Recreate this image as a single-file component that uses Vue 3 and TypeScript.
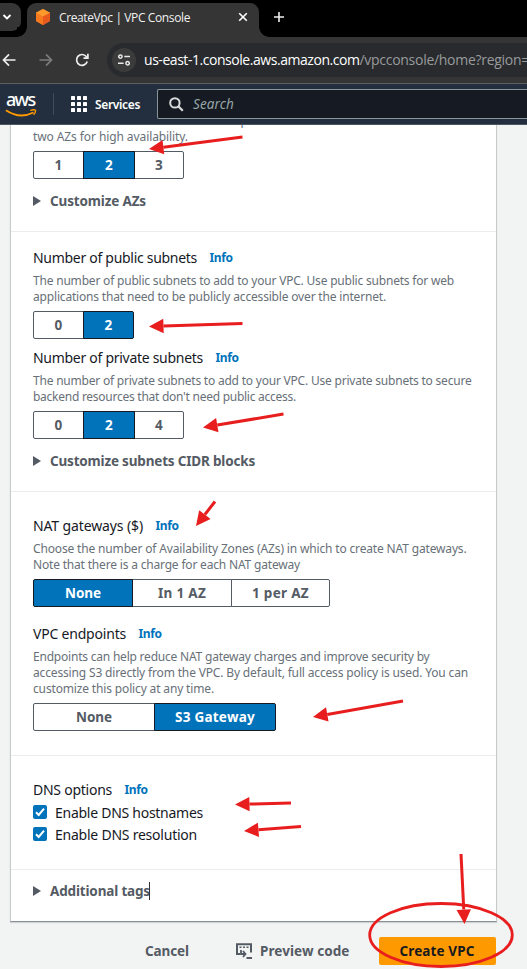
<script setup lang="ts">
import { computed, type Directive } from 'vue'

interface Line { text: string; width: number }
interface Option { label: string; size: number; textWidth: number; active?: boolean }
interface Field {
  title: string
  titleWidth: number
  lines: Line[]
  options: Option[]
}
interface Arrow { tail: [number, number]; tip: [number, number] }

// Tracks the text so that it fills the given width in pixels.
const vFit: Directive<HTMLElement, number> = {
  mounted(el, binding) {
    const natural = el.getBoundingClientRect().width
    const count = (el.textContent ?? '').length
    if (count > 0) el.style.letterSpacing = `${(binding.value - natural) / count}px`
  },
}

const azLines: Line[] = [
  { text: 'Choose the number of AZs in which to provision subnets. We recommend at least', width: 436 },
  { text: 'two AZs for high availability.', width: 155 },
]
const azOptions: Option[] = [
  { label: '1', size: 51, textWidth: 8 },
  { label: '2', size: 52, textWidth: 8, active: true },
  { label: '3', size: 50, textWidth: 8 },
]

const subnetFields: Field[] = [
  {
    title: 'Number of public subnets',
    titleWidth: 164,
    lines: [
      { text: 'The number of public subnets to add to your VPC. Use public subnets for web', width: 421 },
      { text: 'applications that need to be publicly accessible over the internet.', width: 353 },
    ],
    options: [
      { label: '0', size: 51, textWidth: 8 },
      { label: '2', size: 51, textWidth: 8, active: true },
    ],
  },
  {
    title: 'Number of private subnets',
    titleWidth: 170,
    lines: [
      { text: 'The number of private subnets to add to your VPC. Use private subnets to secure', width: 438.5 },
      { text: "backend resources that don't need public access.", width: 263 },
    ],
    options: [
      { label: '0', size: 51, textWidth: 8 },
      { label: '2', size: 52, textWidth: 8, active: true },
      { label: '4', size: 50, textWidth: 8 },
    ],
  },
]

const gatewayFields: Field[] = [
  {
    title: 'NAT gateways ($)',
    titleWidth: 110,
    lines: [
      { text: 'Choose the number of Availability Zones (AZs) in which to create NAT gateways.', width: 433.5 },
      { text: 'Note that there is a charge for each NAT gateway', width: 267 },
    ],
    options: [
      { label: 'None', size: 100, textWidth: 36, active: true },
      { label: 'In 1 AZ', size: 100, textWidth: 48 },
      { label: '1 per AZ', size: 99, textWidth: 57 },
    ],
  },
  {
    title: 'VPC endpoints',
    titleWidth: 93,
    lines: [
      { text: 'Endpoints can help reduce NAT gateway charges and improve security by', width: 396.5 },
      { text: 'accessing S3 directly from the VPC. By default, full access policy is used. You can', width: 435 },
      { text: 'customize this policy at any time.', width: 181 },
    ],
    options: [
      { label: 'None', size: 122, textWidth: 36 },
      { label: 'S3 Gateway', size: 122, textWidth: 80, active: true },
    ],
  },
]

const dnsOptions: Line[] = [
  { text: 'Enable DNS hostnames', width: 148 },
  { text: 'Enable DNS resolution', width: 142 },
]

const arrows: Arrow[] = [
  { tail: [242.5, 137], tip: [149, 149] },
  { tail: [242.5, 323.5], tip: [149, 326.5] },
  { tail: [283.5, 414], tip: [203, 427.5] },
  { tail: [215, 501.5], tip: [196, 526] },
  { tail: [403, 701], tip: [313, 717] },
  { tail: [291, 803], tip: [235, 804.5] },
  { tail: [301, 826.5], tip: [244, 831] },
  { tail: [461, 854], tip: [464.5, 924] },
]

const drawnArrows = computed(() =>
  arrows.map(({ tail, tip }) => {
    const dx = tip[0] - tail[0]
    const dy = tip[1] - tail[1]
    const len = Math.hypot(dx, dy)
    const ux = dx / len
    const uy = dy / len
    const bx = tip[0] - ux * 14.5
    const by = tip[1] - uy * 14.5
    return {
      x1: tail[0],
      y1: tail[1],
      x2: bx,
      y2: by,
      head: `${tip[0]},${tip[1]} ${bx - uy * 7.2},${by + ux * 7.2} ${bx + uy * 7.2},${by - ux * 7.2}`,
    }
  }),
)
</script>

<template>
  <div class="screen">
    <div class="tabs">
      <div class="tab-search">
        <svg width="10" height="8" viewBox="0 0 10 8"><path d="M1.5 2 5 5.5 8.5 2" fill="none" stroke="#fff" stroke-width="1.8" /></svg>
      </div>
      <div class="tab">
        <svg class="cube" width="14" height="16" viewBox="0 0 14 16">
          <path d="M7 0 14 3.8V12L7 16 0 12V3.8Z" fill="#f58536" />
          <path d="M7 0 14 3.8 7 7.5 0 3.8Z" fill="#fd9a2b" />
          <path d="M7 7.5 14 3.8V12L7 16Z" fill="#e8591c" />
          <path d="M0 3.8 7 7.5V16L0 12Z" fill="#f67a1d" />
        </svg>
        <span v-fit="131" class="tab-title">CreateVpc | VPC Console</span>
        <svg class="close" width="10" height="10" viewBox="0 0 10 10"><path d="M1.2 1.2 8.8 8.8M8.8 1.2 1.2 8.8" stroke="#fff" stroke-width="1.6" /></svg>
      </div>
      <svg class="plus" width="12" height="12" viewBox="0 0 12 12"><path d="M6 1V11M1 6H11" stroke="#eee" stroke-width="1.6" /></svg>
    </div>

    <div class="toolbar">
      <svg class="back" width="14" height="14" viewBox="0 0 14 14"><path d="M7 1.3 1.5 7 7 12.7M1.5 7H13.5" fill="none" stroke="#ededed" stroke-width="1.7" /></svg>
      <svg class="forward" width="14" height="14" viewBox="0 0 14 14"><path d="M7 1.3 12.5 7 7 12.7M12.5 7H.5" fill="none" stroke="#7c7c7c" stroke-width="1.7" /></svg>
      <svg class="reload" width="14" height="14" viewBox="0 0 14 14"><path d="M12.2 8.4A5.4 5.4 0 1 1 11.3 3.6L12.6 5M12.9.8V5.1H8.5" fill="none" stroke="#ededed" stroke-width="1.7" /></svg>
      <div class="omnibox">
        <span class="site-info">
          <svg width="12" height="12" viewBox="0 0 12 12" fill="none" stroke="#e8e8e8" stroke-width="1.5">
            <circle cx="2.4" cy="2.6" r="1.7" /><path d="M6.3 2.6H12M0 9.3H5.6" /><circle cx="9.6" cy="9.3" r="1.7" />
          </svg>
        </span>
        <span v-fit="215.5" class="host">us-east-1.console.aws.amazon.com</span>
        <span v-fit="169.5" class="path">/vpcconsole/home?region=</span>
      </div>
    </div>

    <div class="nav">
      <div class="logo">
        <span v-fit="28.5" class="logo-text">aws</span>
        <svg class="smile" width="32" height="9" viewBox="0 0 32 9">
          <path d="M1 1.2Q14.5 10.5 28.5 3.5" fill="none" stroke="#f90" stroke-width="1.9" />
          <path d="M25.2 1.5Q29 .2 30.5 1.2Q31 3.2 28.6 5.8" fill="none" stroke="#f90" stroke-width="1.3" />
        </svg>
      </div>
      <div class="nav-rule"></div>
      <svg class="grid" width="16" height="16" viewBox="0 0 16 16" fill="#fff">
        <template v-for="r in 3" :key="r">
          <rect v-for="c in 3" :key="c" :x="(c - 1) * 6" :y="(r - 1) * 6" width="4" height="4" rx=".6" />
        </template>
      </svg>
      <span v-fit="45" class="services">Services</span>
      <div class="search">
        <svg width="15" height="15" viewBox="0 0 15 15"><circle cx="5.9" cy="5.9" r="4.7" fill="none" stroke="#d9dcdc" stroke-width="2" /><path d="M9.3 9.3 13.8 13.8" stroke="#d9dcdc" stroke-width="2.2" /></svg>
        <span v-fit="41" class="search-text">Search</span>
      </div>
    </div>

    <main class="content">
      <div class="card">
        <section class="sec az">
          <p class="desc"><span v-for="l in azLines" :key="l.text" v-fit="l.width">{{ l.text }}</span></p>
          <div class="segments">
            <button v-for="o in azOptions" :key="o.label" :class="{ active: o.active }" :style="{ width: o.size + 'px' }"><span v-fit="o.textWidth">{{ o.label }}</span></button>
          </div>
          <div class="expander"><i></i><span v-fit="96">Customize AZs</span></div>
        </section>

        <section class="sec subnets">
          <div v-for="f in subnetFields" :key="f.title" class="field">
            <h3><span v-fit="f.titleWidth">{{ f.title }}</span><a v-fit="23">Info</a></h3>
            <p class="desc"><span v-for="l in f.lines" :key="l.text" v-fit="l.width">{{ l.text }}</span></p>
            <div class="segments">
              <button v-for="o in f.options" :key="o.label" :class="{ active: o.active }" :style="{ width: o.size + 'px' }"><span v-fit="o.textWidth">{{ o.label }}</span></button>
            </div>
          </div>
          <div class="expander"><i></i><span v-fit="205">Customize subnets CIDR blocks</span></div>
        </section>

        <section class="sec gateways">
          <div v-for="f in gatewayFields" :key="f.title" class="field">
            <h3><span v-fit="f.titleWidth">{{ f.title }}</span><a v-fit="23">Info</a></h3>
            <p class="desc"><span v-for="l in f.lines" :key="l.text" v-fit="l.width">{{ l.text }}</span></p>
            <div class="segments">
              <button v-for="o in f.options" :key="o.label" :class="{ active: o.active }" :style="{ width: o.size + 'px' }"><span v-fit="o.textWidth">{{ o.label }}</span></button>
            </div>
          </div>
        </section>

        <section class="sec dns">
          <h3><span v-fit="79">DNS options</span><a v-fit="23">Info</a></h3>
          <label v-for="d in dnsOptions" :key="d.text">
            <svg width="14" height="14" viewBox="0 0 14 14"><rect width="14" height="14" rx="2" fill="#0073bb" /><path d="M3 7.3 5.7 10 11 3.7" fill="none" stroke="#fff" stroke-width="2" /></svg>
            <span v-fit="d.width">{{ d.text }}</span>
          </label>
        </section>

        <section class="sec tags">
          <div class="expander"><i></i><span v-fit="100">Additional tags</span><b class="caret"></b></div>
        </section>
      </div>

      <footer class="actions">
        <span v-fit="44" class="cancel">Cancel</span>
        <svg class="code-icon" width="17" height="17" viewBox="0 0 17 17" fill="none" stroke="#545b64" stroke-width="2">
          <path d="M4.2 11H1V1.2H15V9.5" /><path d="M3.5 4.3H12.5" stroke-dasharray="2 1.5" stroke-width="1.6" /><path d="M5 7V11H9M7 8 9.5 11 7 14M10.5 15H16" stroke-width="1.8" />
        </svg>
        <span v-fit="89.5" class="preview">Preview code</span>
        <button class="create"><span v-fit="75">Create VPC</span></button>
      </footer>
    </main>

    <svg class="marks" width="527" height="969" viewBox="0 0 527 969">
      <g v-for="(a, i) in drawnArrows" :key="i">
        <line :x1="a.x1" :y1="a.y1" :x2="a.x2" :y2="a.y2" />
        <polygon :points="a.head" />
      </g>
      <ellipse cx="441" cy="935" rx="71.3" ry="31.5" />
    </svg>
  </div>
</template>

<style>
body { overflow: hidden; }
</style>

<style scoped>
.screen {
  position: relative;
  width: 527px;
  height: 969px;
  overflow: hidden;
  display: flex;
  flex-direction: column;
  background: #f2f3f3;
  font-family: "Noto Sans", "Open Sans", sans-serif;
  color: #16191f;
  white-space: nowrap;
}
.screen * { box-sizing: border-box; }
svg { display: block; flex: none; }

.tabs { height: 37px; flex: none; background: #000; display: flex; }
.tab-search { width: 21px; height: 28px; margin-top: 3px; background: #353535; border-radius: 0 9px 9px 0; display: flex; align-items: center; padding-left: 2px; }
.tab { position: relative; width: 232px; height: 34px; margin: 3px 0 0 6px; background: #353535; border-radius: 9px 9px 0 0; display: flex; align-items: center; padding: 0 11px 6px 9px; }
.tab::before, .tab::after { content: ""; position: absolute; bottom: 0; width: 10px; height: 10px; }
.tab::before { left: -10px; background: radial-gradient(circle at 0 0, #000 9.5px, #353535 10px); }
.tab::after { right: -10px; background: radial-gradient(circle at 100% 0, #000 9.5px, #353535 10px); }
.tab-title { margin: 1px 0 0 9px; font-family: "Open Sans", sans-serif; font-size: 12px; line-height: 16px; color: #f1f1f1; }
.close { margin-left: auto; }
.plus { margin: 11px 0 0 14px; }

.toolbar { height: 47px; flex: none; background: #353535; border-bottom: 1px solid #5c605c; display: flex; align-items: center; padding-left: 2px; }
.forward { margin-left: 23px; }
.reload { margin-left: 22px; }
.omnibox { flex: 1; min-width: 0; height: 34px; margin-left: 18px; background: #282a2d; border-radius: 17px 0 0 17px; display: flex; align-items: center; padding-left: 5px; }
.site-info { flex: none; width: 24px; height: 24px; border-radius: 50%; background: #3b3b3c; display: flex; align-items: center; justify-content: center; }
.host, .path { flex: none; font-family: "Open Sans", sans-serif; font-size: 14px; line-height: 20px; }
.host { margin-left: 8px; color: #fff; }
.path { color: #989a9c; }

.nav { height: 41px; flex: none; background: #232f3e; border-bottom: 1px solid #4b5663; display: flex; align-items: center; }
.logo { width: 32px; height: 26px; margin-left: 5px; display: flex; flex-direction: column; }
.logo-text { align-self: flex-start; height: 18px; margin-left: 1px; font-size: 18px; line-height: 17px; font-weight: 500; color: #fff; }
.smile { margin-top: 1px; }
.nav-rule { width: 1px; height: 22px; margin-left: 16px; background: #414d5c; }
.grid { margin-left: 17px; }
.services { margin-left: 8px; font-size: 12px; font-weight: 600; color: #fff; }
.search { flex: 1; height: 30px; margin-left: 17px; border: 1px solid #879596; border-right: 0; background: #161a22; border-radius: 2px 0 0 2px; display: flex; align-items: center; padding-left: 11px; }
.search-text { margin-left: 9px; font-size: 13.5px; font-style: italic; color: #95a5a6; }

.content { flex: 1; overflow: hidden; padding-left: 10px; }
.card { width: 487px; height: 797px; background: #fff; border: 1px solid #c6caca; border-top: 0; border-bottom: 1px solid #879196; box-shadow: 0 1px 1px #0002; }
.sec { display: flow-root; padding: 0 22px; border-bottom: 1px solid #eaeded; }
.az { height: 107px; }
.subnets { height: 260px; padding-top: 16px; }
.gateways { height: 264px; padding-top: 24px; }
.dns { height: 114px; padding-top: 24px; }
.tags { border: 0; padding-top: 11px; }

h3 { height: 20px; margin: 0; display: flex; align-items: center; gap: 12.5px; font-size: 14px; line-height: 20px; font-weight: 400; }
h3 span, h3 a { flex: none; }
h3 a { color: #0073bb; font-size: 12px; font-weight: 700; }
.desc { margin: 5px 0 6px; display: flex; flex-direction: column; align-items: flex-start; font-size: 12px; line-height: 16px; color: #687078; }
.az .desc { margin-top: -12px; }
.subnets .field + .field { margin-top: 9px; }
.gateways .field + .field { margin-top: 17px; }

.segments { display: flex; height: 28px; }
.segments button { flex: none; height: 28px; margin: 0 -1px 0 0; padding: 0; border: 1px solid #545b64; background: #fff; color: #545b64; font: 700 13.5px/20px "Noto Sans", sans-serif; display: flex; align-items: center; justify-content: center; }
.segments button:first-child { border-radius: 2px 0 0 2px; }
.segments button:last-child { border-radius: 0 2px 2px 0; }
.segments .active { position: relative; background: #0073bb; border-color: #16191f; color: #fff; }

.expander { display: flex; align-items: center; height: 20px; font-size: 13.5px; line-height: 20px; font-weight: 700; color: #545b64; }
.az .expander, .subnets .expander { margin-top: 12px; }
.expander i { width: 0; height: 0; margin-right: 9px; border: 5px solid transparent; border-left: 8px solid #545b64; border-right: 0; }
.expander span { flex: none; }
.caret { width: 1px; height: 18px; margin-left: -1px; background: #333; }

label { display: flex; align-items: center; gap: 8px; height: 22px; font-size: 14px; }
.dns h3 { margin-bottom: 1px; }

.actions { display: flex; align-items: center; height: 28px; margin-top: 15px; padding-left: 135px; font-size: 13.5px; font-weight: 700; color: #545b64; }
.code-icon { margin-left: 47px; }
.preview { margin-left: 7px; }
.create { width: 117px; height: 28px; margin-left: 29px; padding: 0; border: 0; border-radius: 2px; background: #f90; color: #16191f; font: 700 13.5px/20px "Noto Sans", sans-serif; }

.marks { position: absolute; left: 0; top: 0; pointer-events: none; }
.marks line { stroke: #e81e1e; stroke-width: 3; }
.marks polygon { fill: #e81e1e; }
.marks ellipse { fill: none; stroke: #e81e1e; stroke-width: 2.8; }
</style>
